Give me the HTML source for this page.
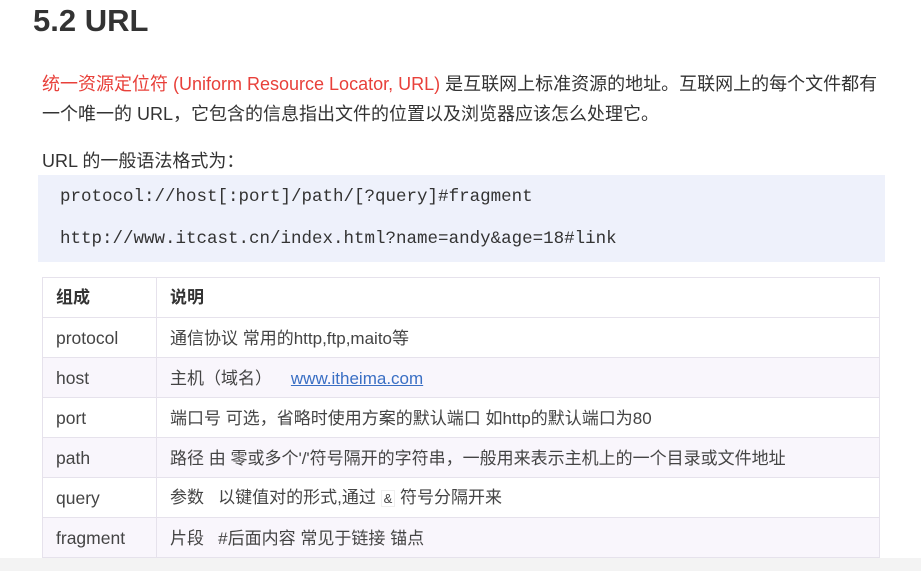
<!DOCTYPE html>
<html><head><meta charset="utf-8"><style>
body{margin:0;width:921px;height:571px;background:#fff;overflow:hidden;position:relative;font-family:"Liberation Sans","Noto Sans CJK SC",sans-serif;color:#333}
.a{position:absolute;white-space:nowrap}
h1{position:absolute;left:33px;top:3px;margin:0;font-size:31px;font-weight:bold;color:#333}
.p{font-size:18px;color:#333}
.code{position:absolute;left:38px;top:175px;width:847px;height:87px;background:#eef1fb}
.mono{font-family:"Liberation Mono",monospace;font-size:17.5px;color:#333}
table{position:absolute;left:42px;top:277px;width:838px;border-collapse:collapse;font-size:17px;color:#444}
tr{height:40px}
td,th{border:1px solid #e6e2ec;padding:0 0 0 13px;vertical-align:middle;line-height:20px}
td{padding-top:2px}
td:first-child span{font-size:17.5px}
tr.s td{background:#f9f6fc}
th{text-align:left;font-weight:bold;color:#333}
a{color:#3a6fc4;text-decoration:underline}
.bot{position:absolute;left:0;top:558px;width:921px;height:13px;background:#f3f3f3}
</style></head><body>
<h1>5.2 URL</h1>
<div class="a p" style="left:42px;top:70px"><span style="color:#e8403a">统一资源定位符 (Uniform Resource Locator, URL)</span> 是互联网上标准资源的地址。互联网上的每个文件都有</div>
<div class="a p" style="left:42px;top:100px">一个唯一的 URL，它包含的信息指出文件的位置以及浏览器应该怎么处理它。</div>
<div class="a p" style="left:42px;top:147px">URL 的一般语法格式为：</div>
<div class="code"></div>
<div class="a mono" style="left:60px;top:187px">protocol://host[:port]/path/[?query]#fragment</div>
<div class="a mono" style="left:60px;top:229px">http://www.itcast.cn/index.html?name=andy&amp;age=18#link</div>
<table>
<tr><th style="width:100px">组成</th><th>说明</th></tr>
<tr><td><span>protocol</span></td><td>通信协议 常用的http,ftp,maito等</td></tr>
<tr class="s"><td><span>host</span></td><td>主机（域名）&nbsp;&nbsp;&nbsp; <a>www.itheima.com</a></td></tr>
<tr><td><span>port</span></td><td>端口号 可选，省略时使用方案的默认端口 如http的默认端口为80</td></tr>
<tr class="s"><td><span>path</span></td><td>路径 由 零或多个'/'符号隔开的字符串，一般用来表示主机上的一个目录或文件地址</td></tr>
<tr><td><span>query</span></td><td>参数&nbsp;&nbsp; 以键值对的形式,通过 <span style="font-size:13px;border:1px solid #eee;padding:0 2px">&amp;</span> 符号分隔开来</td></tr>
<tr class="s"><td><span>fragment</span></td><td>片段&nbsp;&nbsp; #后面内容 常见于链接 锚点</td></tr>
</table>
<div class="bot"></div>
</body></html>
